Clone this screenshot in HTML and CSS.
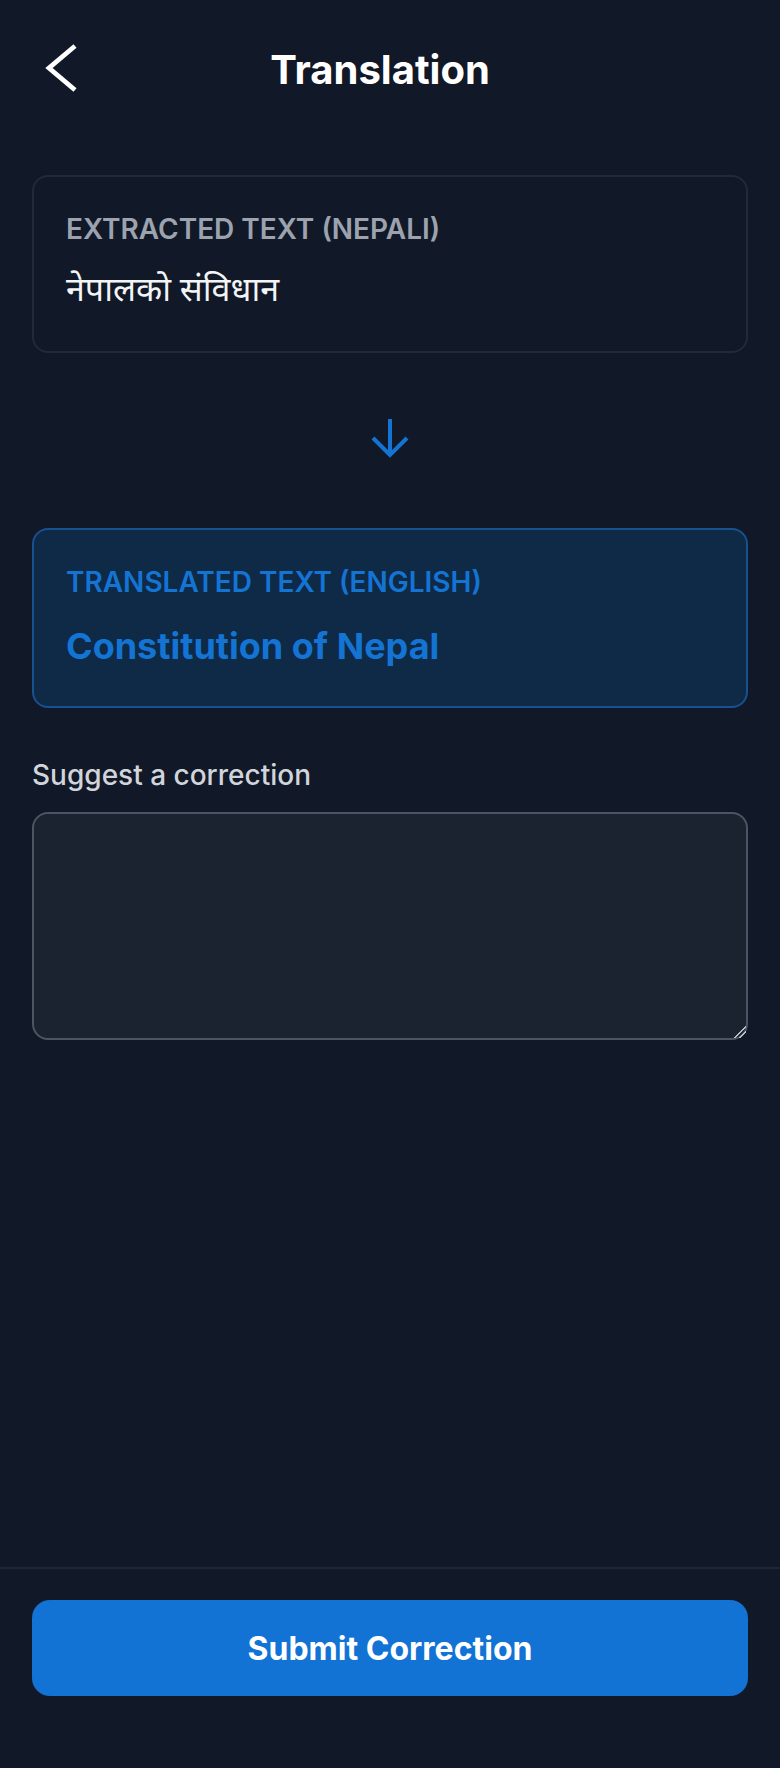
FILE: index.html
```html
<!DOCTYPE html>
<html lang="en">
<head>
<meta charset="utf-8">
<title>Translation</title>
<link rel="stylesheet" href="styles.css">
</head>
<body>
<div class="screen">
  <header class="topbar">
    <button class="back" type="button" aria-label="Back">
      <svg viewBox="0 0 48 56" width="48" height="56" aria-hidden="true"><polyline points="43,4 17,26 43,48" fill="none" stroke="#ffffff" stroke-width="4.8" stroke-linecap="butt" stroke-linejoin="miter"/></svg>
    </button>
    <h1 class="title">Translation</h1>
    <span class="spacer"></span>
  </header>

  <main class="content">
    <section class="card card-source">
      <p class="card-label">Extracted Text (Nepali)</p>
      <p class="card-text nepali" lang="ne">नेपालको संविधान</p>
    </section>

    <div class="arrow">
      <svg viewBox="0 0 40 40" width="40" height="40" aria-hidden="true"><path d="M20 1V37M3 20L20 37L37 20" fill="none" stroke="#1474d4" stroke-width="4" stroke-linecap="butt" stroke-linejoin="miter"/></svg>
    </div>

    <section class="card card-target">
      <p class="card-label label-blue">Translated Text (English)</p>
      <p class="card-text english">Constitution of Nepal</p>
    </section>

    <label class="field-label" for="correction">Suggest a correction</label>
    <textarea id="correction" class="field"></textarea>
  </main>

  <footer class="bottombar">
    <button class="submit" type="button">Submit Correction</button>
  </footer>
</div>
</body>
</html>
```

FILE: styles.css
```css
* { box-sizing: border-box; }

html, body {
  margin: 0;
  padding: 0;
  background: #111827;
}

body {
  font-family: Inter, "Noto Sans", "Liberation Sans", sans-serif;
  color: #ffffff;
}

.screen {
  min-height: 1768px;
  display: flex;
  flex-direction: column;
  background: #111827;
}

.topbar {
  display: grid;
  grid-template-columns: 1fr auto 1fr;
  align-items: center;
  padding: 42px 52px 45px 32px;
}

.back {
  justify-self: start;
  width: 48px;
  height: 56px;
  padding: 0;
  border: 0;
  background: transparent;
  display: flex;
}

.title {
  margin: 0;
  font-size: 40px;
  line-height: 56px;
  font-weight: 700;
  color: #ffffff;
}

.content {
  flex: 1;
  display: flex;
  flex-direction: column;
  padding: 32px 32px 0;
}

.card {
  border: 2px solid #212a36;
  border-radius: 16px;
  padding: 32px;
  background: #111827;
}

.card-target {
  background: #0f2a47;
  border-color: #17518f;
}

.card-label {
  margin: 0 0 16px;
  font-size: 28px;
  line-height: 40px;
  font-weight: 600;
  text-transform: uppercase;
  color: #9ca3af;
}

.label-blue {
  color: #1474d4;
}

.card-text {
  margin: 0;
}

.nepali {
  font-family: "Noto Sans Devanagari", "Noto Sans", "Lohit Devanagari", sans-serif;
  font-size: 34px;
  line-height: 51px;
  padding-top: 3px;
  font-weight: 400;
  color: #f3f4f6;
}

.english {
  font-size: 36px;
  line-height: 56px;
  font-weight: 700;
  color: #1474d4;
}

.arrow {
  display: flex;
  justify-content: center;
  padding: 65px 0 70px;
}

.arrow svg {
  display: block;
}

.field-label {
  margin-top: 47px;
  margin-bottom: 17px;
  font-size: 28px;
  line-height: 40px;
  font-weight: 500;
  color: #d1d5db;
}

.field {
  display: block;
  width: 100%;
  height: 228px;
  border: 2px solid #4b5563;
  border-radius: 16px;
  background: #1b2230;
  color: #f3f4f6;
  font-family: inherit;
  font-size: 28px;
  padding: 20px 24px;
  resize: vertical;
  color-scheme: dark;
  outline: none;
}

.field::-webkit-resizer {
  background:
    linear-gradient(135deg, transparent 0 58%, #b8bec8 58% 66%, transparent 66% 74%, #b8bec8 74% 82%, transparent 82%);
}

.bottombar {
  border-top: 2px solid #1f2733;
  padding: 31px 32px 72px;
}

.submit {
  display: block;
  width: 100%;
  height: 96px;
  border: 0;
  border-radius: 18px;
  background: #1273d5;
  color: #ffffff;
  font-family: Inter, "Noto Sans", "Liberation Sans", sans-serif;
  font-size: 32px;
  font-weight: 700;
}
```
